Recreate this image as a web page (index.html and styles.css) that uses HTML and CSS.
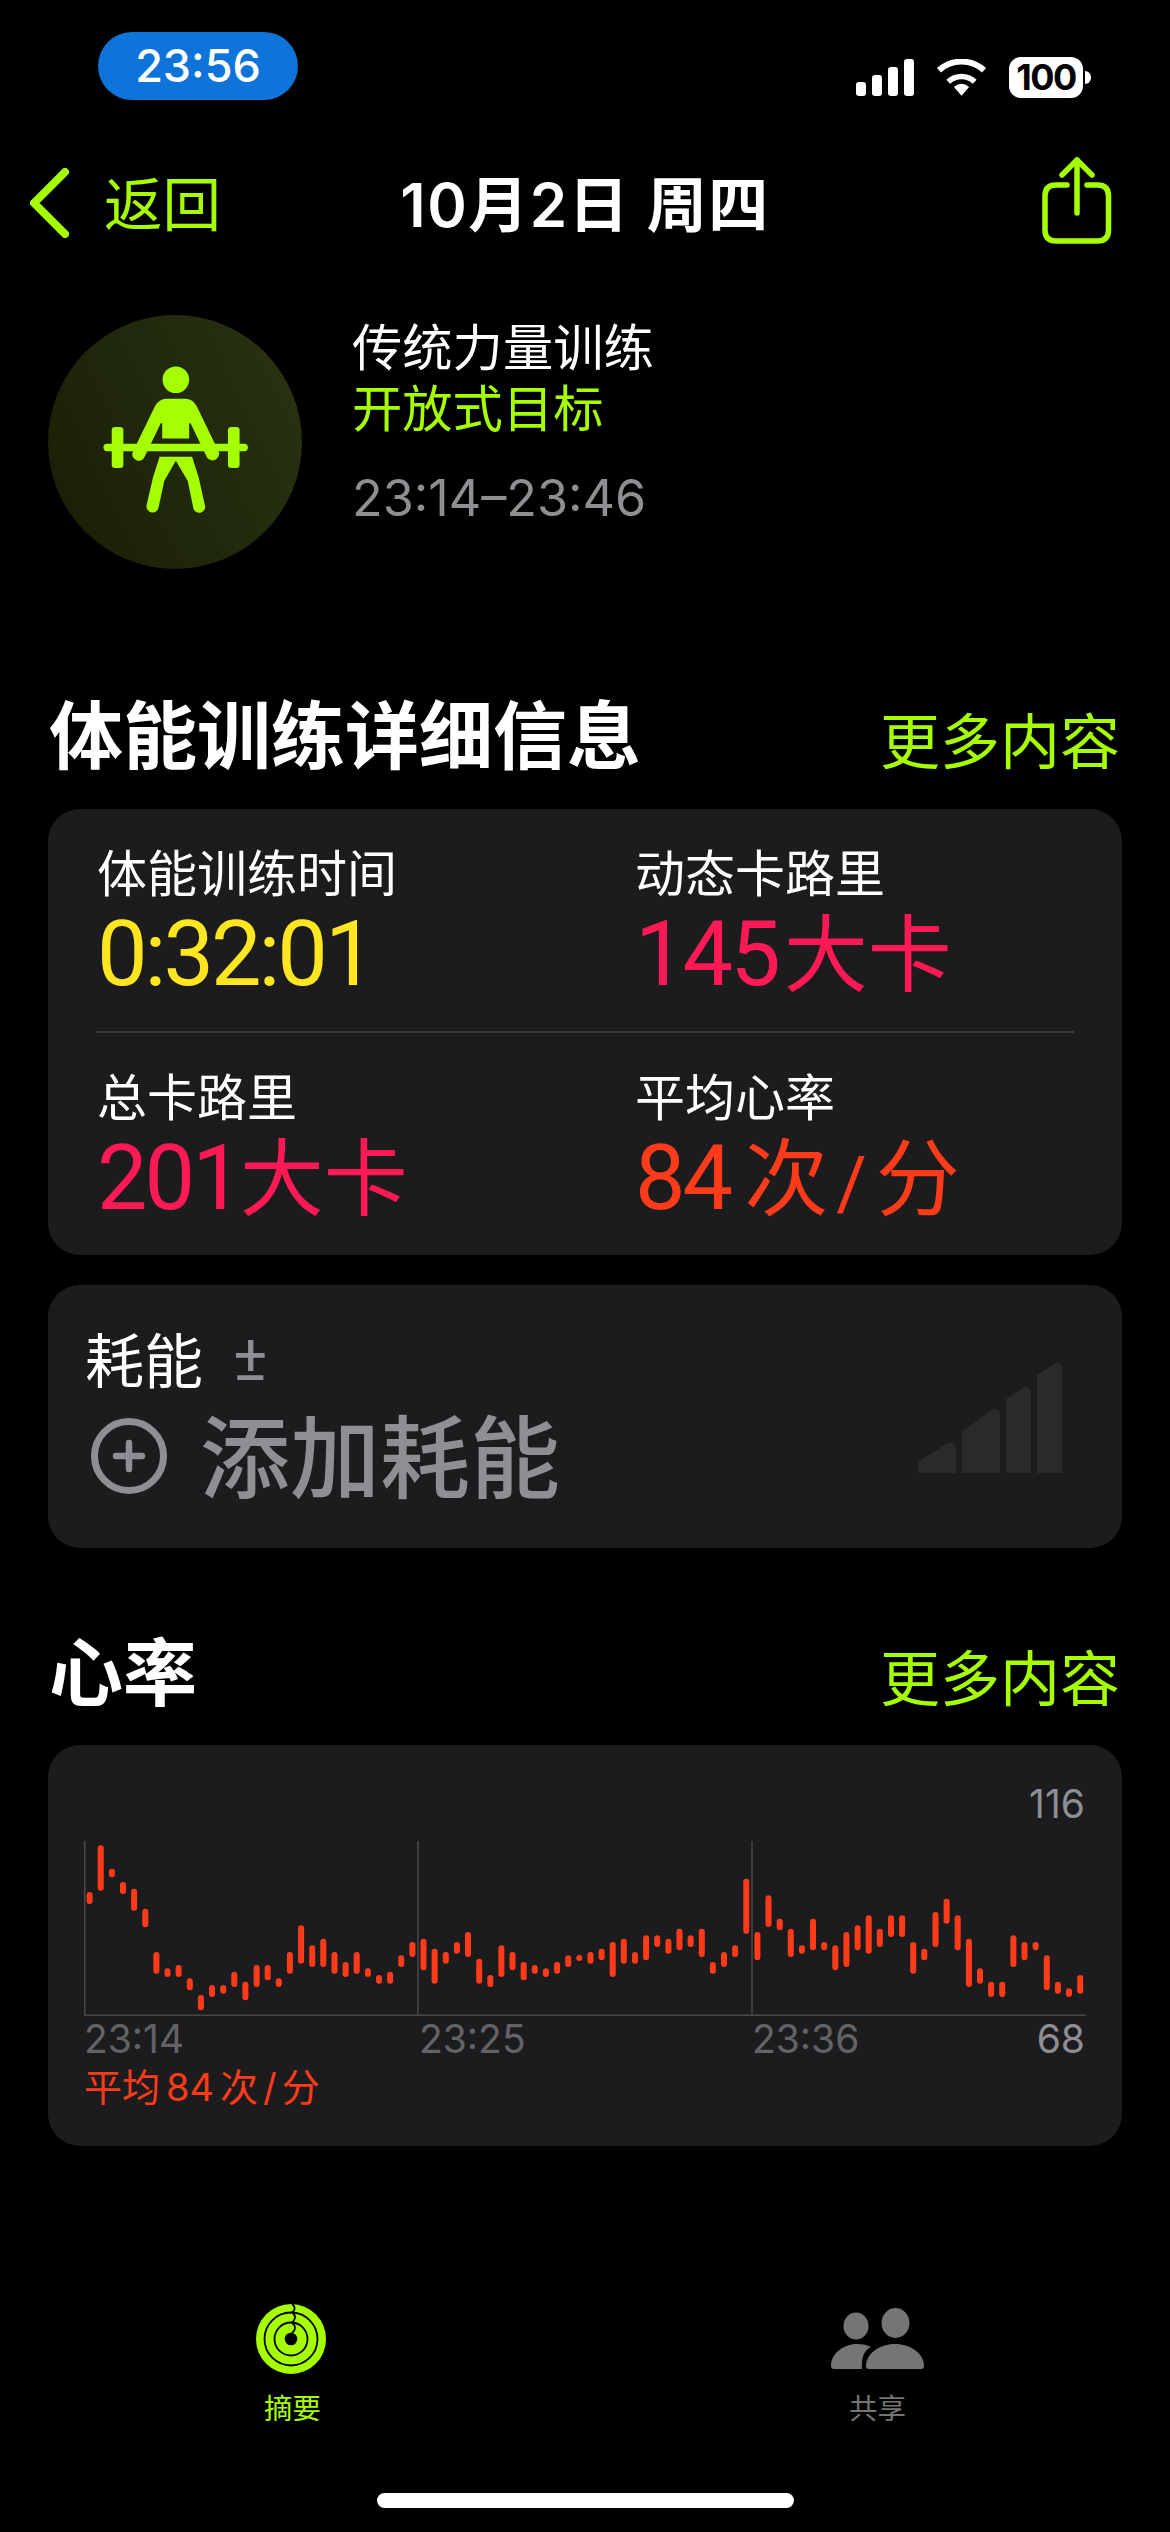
FILE: index.html
```html
<!DOCTYPE html>
<html lang="zh-CN">

<head>
    <meta charset="UTF-8">
    <meta name="viewport" content="width=device-width, initial-scale=1.0">
    <title>体能训练详细信息</title>
    <link rel="stylesheet" href="styles.css">
</head>

<body>

    <!-- Status bar -->
    <div class="status">
        <div class="clock">23:56</div>
        <div class="status-icons">
            <svg class="signal" viewBox="0 0 58 37" width="58" height="37" fill="#fff">
                <rect x="0" y="23" width="10" height="14" rx="3"></rect>
                <rect x="16" y="16" width="10" height="21" rx="3"></rect>
                <rect x="32" y="8" width="10" height="29" rx="3"></rect>
                <rect x="48" y="0" width="10" height="37" rx="3"></rect>
            </svg>
            <svg class="wifi" viewBox="0 0 148 110" width="49" height="37" fill="none" stroke="#fff">
                <path d="M6 33A102 102 0 0 1 142 33" stroke-width="18"></path>
                <path d="M34 68A58 58 0 0 1 114 68" stroke-width="17"></path>
                <path d="M74 110L51 84Q74 64 97 84Z" fill="#fff" stroke="none"></path>
            </svg>
            <div class="battery">100</div>
            <div class="battery-nib"></div>
        </div>
    </div>

    <!-- Nav bar -->
    <div class="nav">
        <div class="back">
            <svg viewBox="0 0 39 70" width="39" height="70" fill="none" stroke="#a6ff00" stroke-width="8" stroke-linecap="round" stroke-linejoin="round">
                <path d="M35 4L4 35L35 66"></path>
            </svg>
            <span>返回</span>
        </div>
        <div class="nav-title">10月2日 周四</div>
        <svg class="share" viewBox="0 0 79 97" width="79" height="97" fill="none" stroke="#a6ff00" stroke-width="5.5" stroke-linecap="round" stroke-linejoin="round">
            <path d="M30 28H19Q8 28 8 39V73Q8 84 19 84H60.5Q71.5 84 71.5 73V39Q71.5 28 60.5 28H50"></path>
            <path d="M40 3V56"></path>
            <path d="M25 18L40 3L55 18"></path>
        </svg>
    </div>

    <!-- Workout summary -->
    <div class="summary">
        <div class="workout-icon">
            <svg viewBox="24 45 765 765" width="254" height="254" fill="#a6ff00">
                <circle cx="409" cy="240" r="40"></circle>
                <path d="M378 297H440Q462 299 472 320L536 452A19 19 0 0 1 503 474L453 370L449 372V417H368V372L364 370L314 474A19 19 0 0 1 280 456L345 322Q356 299 378 297Z"></path>
                <rect x="191" y="433" width="435" height="22" rx="11"></rect>
                <rect x="216" y="382" width="35" height="124" rx="10"></rect>
                <rect x="566" y="382" width="35" height="124" rx="10"></rect>
                <path d="M360 472H458L478 535L497 620A18 18 0 0 1 462 628L445 545L409 484L374 545L357 625A18 18 0 0 1 321 618L340 535Z"></path>
            </svg>
        </div>
        <div class="summary-text">
            <div class="summary-name">传统力量训练</div>
            <div class="summary-goal">开放式目标</div>
            <div class="summary-time">23:14–23:46</div>
        </div>
    </div>

    <!-- Workout details -->
    <div class="section-head details-head">
        <h2>体能训练详细信息</h2>
        <span class="more">更多内容</span>
    </div>

    <div class="card metrics">
        <div class="metric-row">
            <div class="metric">
                <div class="metric-label">体能训练时间</div>
                <div class="metric-value yellow"><span class="num">0:32:01</span></div>
            </div>
            <div class="metric">
                <div class="metric-label">动态卡路里</div>
                <div class="metric-value pink"><span class="num">145</span><span class="gap-small">大卡</span></div>
            </div>
        </div>
        <div class="metric-divider"></div>
        <div class="metric-row">
            <div class="metric">
                <div class="metric-label">总卡路里</div>
                <div class="metric-value pink"><span class="num">201</span>大卡</div>
            </div>
            <div class="metric">
                <div class="metric-label">平均心率</div>
                <div class="metric-value red"><span class="num">84</span><span class="gap-large">次</span><span class="slash">/</span>分</div>
            </div>
        </div>
    </div>

    <div class="card effort">
        <div class="effort-left">
            <div class="effort-label">耗能<span class="effort-sign">±</span></div>
            <div class="effort-add">
                <svg viewBox="0 0 76 76" width="76" height="76" fill="none" stroke="#8e8e93" stroke-linecap="round">
                    <circle cx="38" cy="38" r="34.5" stroke-width="7"></circle>
                    <path d="M38 25V51M25 38H51" stroke-width="6.5"></path>
                </svg>
                <span>添加耗能</span>
            </div>
        </div>
        <svg class="effort-bars" viewBox="0 0 144 111" width="144" height="111" fill="#2a2a2c">
            <path d="M0 111V100L28 82Q34 78 38 86V111Z"></path>
            <path d="M44 111V70L72 49Q79 44 82 52V111Z"></path>
            <path d="M88 111V37L105 26Q111 22 113 30V111Z"></path>
            <path d="M119 111V13L136 2Q142 -2 144 6V111Z"></path>
        </svg>
    </div>

    <!-- Heart rate -->
    <div class="section-head heart-head">
        <h2>心率</h2>
        <span class="more">更多内容</span>
    </div>

    <div class="card heart">
        <div class="heart-max">116</div>
        <svg class="heart-chart" viewBox="0 0 1002 175" width="1002" height="175" fill="none">
            <path stroke="#48484a" stroke-width="1.5" d="M0.75 0V174M334 0V174M668 0V174M0 174.2H1002"></path>
            <path stroke="#ff3b1a" stroke-width="6" stroke-linecap="round" d="M5.6 54V60M16.7 7.3V46.7M27.9 30.7V33.3M39 44V50M50.1 50.7V66.7M61.3 70.7V83.3M72.4 114V129.7M83.5 130.3V133M94.6 127V133M105.8 140.3V146.3M116.9 157V166.3M128 147V153M139.2 147V149.7M150.3 133.7V143M161.4 143.7V156.3M172.6 127V143M183.7 127V136.3M194.8 140.3V143M205.9 114V129.7M217.1 87.3V119.7M228.2 107.3V123M239.3 100.7V123M250.5 114V129.7M261.6 124V133M272.7 114V129.7M283.9 130.3V133M295 137V139.7M306.1 133.7V139.7M317.2 117.3V123M328.4 104V113M339.5 100.7V126.3M350.6 110.7V139.7M361.8 114V119.7M372.9 104V109.7M384 94V113M395.2 120.7V139.7M406.3 137V143M417.4 107.3V133M428.5 114V126.3M439.7 124V136.3M450.8 127V129.7M461.9 130.3V133M473.1 124V129.7M484.2 117.3V123M495.3 117V117.1M506.5 114V119.7M517.6 110.7V116.3M528.7 104V133M539.8 100.7V119.7M551 114V119.7M562.1 97.3V116.3M573.2 97.3V103M584.4 100.7V109.7M595.5 90.7V106.3M606.6 97.3V103M617.8 90.7V113M628.9 124V129.7M640 114V123M651.1 107.3V113M662.3 40.7V89.7M673.4 94V116.3M684.5 57.3V83M695.7 80.7V86.3M706.8 90.7V113M717.9 107.3V109.7M729 80.7V106.3M740.2 104V106.3M751.3 107.3V126.3M762.4 94V123M773.6 87.3V106.3M784.7 77.3V109.7M795.8 90.7V103M807 77.3V93M818.1 77.3V93M829.2 104V129.7M840.3 110.7V116.3M851.5 74V103M862.6 60.7V79.7M873.7 77.3V106.3M884.9 100.7V143M896 130.3V139.7M907.1 143.7V153M918.2 143.7V153M929.4 97.3V123M940.5 104V116.3M951.6 104V106.3M962.8 117.3V146.3M973.9 143.7V149.7M985 150.3V153M996.2 137V149.7"></path>
        </svg>
        <div class="heart-axis">
            <span>23:14</span>
            <span>23:25</span>
            <span>23:36</span>
            <span class="heart-min">68</span>
        </div>
        <div class="heart-avg">平均<span class="avg-num">84</span>次<span class="avg-slash">/</span>分</div>
    </div>

    <!-- Tab bar -->
    <div class="tabs">
        <div class="tab tab-active">
            <svg viewBox="-35 -35 70 70" width="70" height="70">
                <circle r="35" fill="#a6ff00"></circle>
                <g fill="none" stroke="#000" stroke-width="1.8">
                    <circle r="26.5"></circle>
                    <circle r="16.5"></circle>
                    <path d="M1 -6C5 -9 5 -13 1 -16.5M1 -16.5C5 -20 5 -24 1 -26.5M1 -26.5C5 -29 4 -33 1 -35"></path>
                </g>
                <circle r="6.3" fill="#000"></circle>
            </svg>
            <span>摘要</span>
        </div>
        <div class="tab">
            <svg viewBox="0 0 93 70" width="93" height="70" fill="#757575">
                <ellipse cx="25" cy="22" rx="12.5" ry="13.5"></ellipse>
                <ellipse cx="64.5" cy="19" rx="14" ry="15"></ellipse>
                <path d="M38 65H90Q93 65 93 62C93 50 80 40 64 40C48 40 35 50 35 62Q35 65 38 65Z"></path>
                <path d="M3 65H31C30 54 33 46 40 43C36 41 32 40 26 40C12 40 0 50 0 62Q0 65 3 65Z"></path>
            </svg>
            <span>共享</span>
        </div>
    </div>

    <div class="home-bar"></div>

</body>

</html>
```

FILE: styles.css
```css
body {
    font-family: Inter, "Noto Sans CJK SC", sans-serif;
    width: 1170px;
    height: 2532px;
    margin: 0;
    overflow: hidden;
    background-color: #000000;
    color: #ffffff;
}

/* Status bar */
.status {
    display: flex;
    justify-content: space-between;
    align-items: flex-start;
    box-sizing: border-box;
    height: 150px;
    padding: 32px 79px 0 98px;
}

.clock {
    width: 200px;
    height: 68px;
    border-radius: 34px;
    background-color: #0f74d9;
    font-size: 45px;
    font-weight: 500;
    line-height: 68px;
    text-align: center;
}

.status-icons {
    display: flex;
    align-items: center;
    margin-top: 25px;
}

.wifi {
    margin-left: 23px;
}

.battery {
    width: 74px;
    height: 41px;
    margin-left: 23px;
    border-radius: 12px;
    background-color: #ffffff;
    color: #000000;
    font-size: 36px;
    font-weight: 700;
    line-height: 41px;
    letter-spacing: -1.5px;
    text-align: center;
}

.battery-nib {
    width: 6px;
    height: 13px;
    margin-left: 2px;
    border-radius: 0 6px 6px 0;
    background-color: #ffffff;
}

/* Nav bar */
.nav {
    display: grid;
    grid-template-columns: 1fr auto 1fr;
    grid-template-rows: 100px;
    align-items: center;
    box-sizing: border-box;
    height: 108px;
    padding: 0 54px 0 54px;
}

.back {
    display: flex;
    align-items: center;
    gap: 35px;
    margin-left: -24px;
    color: #a6ff00;
    font-size: 58.5px;
}

.back svg {
    margin-top: 6px;
}

.nav-title {
    font-size: 60px;
    font-weight: 600;
    letter-spacing: 1.5px;
}

.share {
    justify-self: end;
    align-self: start;
    margin-top: 7px;
}

/* Workout summary */
.summary {
    display: flex;
    gap: 50px;
    margin-top: 57px;
    padding-left: 48px;
}

.workout-icon {
    width: 254px;
    height: 254px;
    border-radius: 50%;
    background: linear-gradient(65deg, #181e05, #2a3313);
}

.summary-text {
    padding-top: 2px;
    font-size: 50.3px;
    line-height: 61px;
}

.summary-goal {
    color: #a6ff00;
}

.summary-time {
    margin-top: 28px;
    color: #8e8e93;
}

/* Section headings */
.section-head {
    display: flex;
    justify-content: space-between;
    align-items: center;
    height: 100px;
    padding: 0 50px 0 49px;
}

.section-head h2 {
    margin: 0 0 4px;
    font-size: 74px;
    font-weight: 700;
}

.more {
    margin-top: 10px;
    color: #a6ff00;
    font-size: 60px;
}

.details-head {
    margin-top: 113px;
}

.heart-head {
    margin-top: 71px;
}

/* Cards */
.card {
    box-sizing: border-box;
    margin: 0 48px;
    border-radius: 32px;
    background-color: #1c1c1e;
}

.metrics {
    height: 446px;
    margin-top: 27px;
}

.metric-row {
    display: flex;
    box-sizing: border-box;
    height: 222px;
    padding: 35px 0 0 49px;
}

.metric {
    flex-shrink: 0;
    width: 538px;
}

.metric-label {
    font-size: 50px;
    line-height: 61px;
}

.metric-value {
    padding-top: 3px;
    font-size: 84px;
    line-height: 94px;
}

.metric-value .num {
    font-family: Roboto, sans-serif;
    font-size: 90px;
    letter-spacing: -3px;
}

.metric-value .gap-small {
    margin-left: 6px;
}

.metric-value .gap-large {
    margin-left: 14px;
}

.metric-value .slash {
    margin: 0 9px 0 8px;
    font-family: Roboto, sans-serif;
    font-size: 74px;
}

.yellow {
    color: #ffe620;
}

.pink {
    color: #ff1a55;
}

.red {
    color: #ff3b1a;
}

.metric-divider {
    height: 2px;
    margin: 0 48px;
    background-color: #3a3a3c;
}

/* Effort card */
.effort {
    display: flex;
    justify-content: space-between;
    align-items: flex-start;
    height: 263px;
    margin-top: 30px;
    padding: 44px 60px 0 37px;
}

.effort-label {
    font-size: 59px;
    line-height: 60px;
}

.effort-sign {
    margin-left: 30px;
    color: #8e8e93;
    font-family: Roboto, sans-serif;
    font-size: 64px;
    vertical-align: 3px;
}

.effort-add {
    display: flex;
    align-items: center;
    gap: 33px;
    margin-top: 14px;
    padding-left: 6px;
    color: #8e8e93;
    font-size: 90px;
    font-weight: 500;
    line-height: 100px;
}

.effort-add svg {
    margin-bottom: 3px;
}

.effort-add span {
    padding-top: 3px;
}

.effort-bars {
    margin-top: 33px;
}

/* Heart rate card */
.heart {
    height: 401px;
    margin-top: 26px;
    padding-top: 34px;
}

.heart-max {
    padding-right: 37px;
    color: #8e8e93;
    font-size: 39px;
    line-height: 50px;
    text-align: right;
}

.heart-chart {
    display: block;
    margin: 12px 0 0 36px;
}

.heart-axis {
    display: grid;
    grid-template-columns: 335px 333px 1fr auto;
    padding: 0 37px 0 36px;
    color: #636366;
    font-size: 39px;
    line-height: 46px;
}

.heart-min {
    color: #8e8e93;
}

.heart-avg {
    margin-top: 2px;
    padding-left: 36px;
    color: #ff3b1a;
    font-size: 38px;
    line-height: 46px;
}

.avg-num {
    margin: 0 6px;
}

.avg-slash {
    margin: 0 5px;
}

/* Tab bar */
.tabs {
    display: grid;
    grid-template-columns: 1fr 1fr;
    margin-top: 158px;
}

.tab {
    display: flex;
    flex-direction: column;
    align-items: center;
    color: #757575;
    font-size: 28.5px;
    line-height: 40px;
}

.tab span {
    margin-top: 15px;
}

.tab-active {
    color: #a6ff00;
}

.tab-active svg {
    margin-right: 3px;
}

.home-bar {
    width: 417px;
    height: 15px;
    margin: 64px auto 0;
    border-radius: 8px;
    background-color: #ffffff;
}
```
